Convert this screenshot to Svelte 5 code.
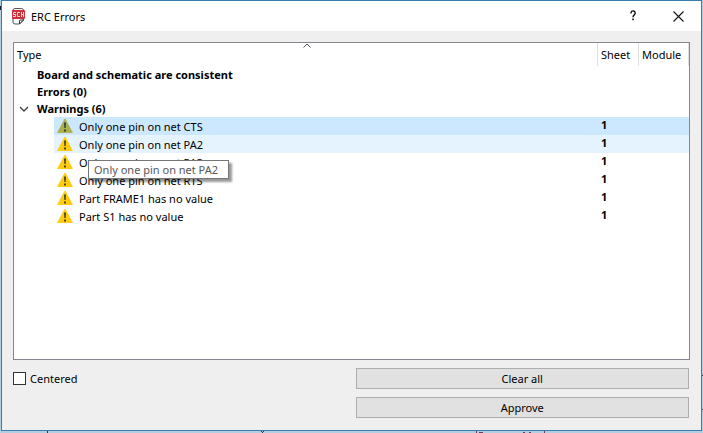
<script lang="ts">
  type Warning = { id: number; text: string; sheet: number };

  const warnings: Warning[] = [
    { id: 1, text: "Only one pin on net CTS", sheet: 1 },
    { id: 2, text: "Only one pin on net PA2", sheet: 1 },
    { id: 3, text: "Only one pin on net PA3", sheet: 1 },
    { id: 4, text: "Only one pin on net RTS", sheet: 1 },
    { id: 5, text: "Part FRAME1 has no value", sheet: 1 },
    { id: 6, text: "Part S1 has no value", sheet: 1 },
  ];

  let selected = $state(1);
  let hovered = $state(2);
  let expanded = $state(true);
  let centered = $state(false);
</script>

<div class="desktop">
  <!-- schematic sheet showing past the dialog edges -->
  <svg class="sheet" aria-hidden="true">
    <path d="M0 6h1v4h-1z" fill="#10183c" />
    <path d="M47 431h1v2h-1zM261 431h1v1h-1zM263 431h1v1h-1zM262 432h1v1h-1z" fill="#2c3a50" />
    <path d="M476 431h1v2h-1zM479 432h4v1h-4zM523 432h2v1h-2zM529 432h2v1h-2zM544 431h1v2h-1z" fill="#6b3f5c" />
    <path d="M702 375h1v1h-1zM702 409h1v1h-1z" fill="#2c3a50" />
  </svg>

  <div class="dialog" role="dialog" aria-labelledby="dialog-title">
    <header class="titlebar">
      <svg class="app-icon" viewBox="0 0 14 17" aria-hidden="true">
        <path d="M4 .5h6.500a2 2 0 0 1 2 2V12l-4 4H4a2 2 0 0 1-2-2V2.500a2 2 0 0 1 2-2z" fill="#fff" stroke="#555" />
        <path d="M8.500 16v-3a1 1 0 0 1 1-1h3z" fill="#eee" stroke="#333" />
        <rect x="1" y="2" width="13" height="9" rx="1" fill="#cf3039" />
        <path d="M5 4.500H2.500v2h2v2H2M9 4.500H6.500v4H9M10.500 4v5M12.500 4v5M10.500 6.500h2" fill="none" stroke="#f4dcdc" />
      </svg>
      <h1 id="dialog-title">ERC Errors</h1>
      <button class="caption" aria-label="Help">
        <svg width="10" height="12" viewBox="0 0 10 12" aria-hidden="true">
          <path d="M2 3.500V3a2 2 0 0 1 4.200 0c0 1.800-2.200 2.200-2.200 4.200" fill="none" stroke="#000" stroke-width="1.300" />
          <rect x="3.300" y="8.500" width="1.500" height="1.700" />
        </svg>
      </button>
      <button class="caption" aria-label="Close">
        <svg width="11" height="11" viewBox="0 0 11 11" aria-hidden="true">
          <path d="M.5.5l10 10M10.500.5l-10 10" stroke="#111" stroke-width="1.100" />
        </svg>
      </button>
    </header>

    <main>
      <div class="tree">
        <svg class="sort" width="8" height="5" viewBox="0 0 8 5" aria-hidden="true">
          <path d="M.5 4.500L4 1l3.500 3.500" fill="none" stroke="#555" />
        </svg>
        <table>
          <colgroup>
            <col />
            <col class="col-sheet" />
            <col class="col-module" />
          </colgroup>
          <thead>
            <tr>
              <th>Type</th>
              <th>Sheet</th>
              <th>Module</th>
            </tr>
          </thead>
          <tbody>
            <tr class="group">
              <td colspan="3"><span class="group-label">Board and schematic are consistent</span></td>
            </tr>
            <tr class="group">
              <td colspan="3"><span class="group-label">Errors (0)</span></td>
            </tr>
            <tr class="group">
              <td colspan="3">
                <button class="group-label toggle" aria-expanded={expanded} onclick={() => (expanded = !expanded)}>
                  <svg class="chevron" class:expanded width="10" height="10" viewBox="0 0 10 10" aria-hidden="true">
                    <path d="M3 1l4 4-4 4" fill="none" stroke="#444" stroke-width="1.400" />
                  </svg>
                  Warnings ({warnings.length})
                </button>
              </td>
            </tr>
            {#if expanded}
              {#each warnings as w (w.id)}
                <tr
                  class="item"
                  class:selected={selected === w.id}
                  class:hovered={hovered === w.id}
                  onclick={() => (selected = w.id)}
                  onmouseenter={() => (hovered = w.id)}
                >
                  <td>
                    <div class="item-label">
                      <svg width="16" height="16" viewBox="0 0 16 16" aria-hidden="true">
                        <path class="sign" d="M8 1L15.300 14.500H.7z" stroke-width="1" stroke-linejoin="round" />
                        <path class="mark" d="M7 4.500h2l-.3 5.500H7.300zM7 11.500h2v2H7z" />
                      </svg>
                      <span>{w.text}</span>
                      {#if hovered === w.id}
                        <div class="tooltip" role="tooltip">{w.text}</div>
                      {/if}
                    </div>
                  </td>
                  <td class="num">{w.sheet}</td>
                  <td></td>
                </tr>
              {/each}
            {/if}
          </tbody>
        </table>
      </div>

      <div class="actions">
        <label class="check">
          <input type="checkbox" bind:checked={centered} />
          Centered
        </label>
        <div class="buttons">
          <button class="push">Clear all</button>
          <button class="push">Approve</button>
        </div>
      </div>
    </main>
  </div>
</div>

<style>
  :global(body) {
    margin: 0;
  }
  .desktop {
    position: relative;
    display: flex;
    box-sizing: border-box;
    min-height: 100vh;
    padding: 0 1px 2px;
    background: #b1cfe2;
    color: #000;
    font-family: "Noto Sans", "Open Sans", sans-serif;
    font-size: 11px;
  }
  .sheet {
    position: absolute;
    inset: 0;
    width: 100%;
    height: 100%;
  }
  .dialog {
    position: relative;
    flex: 1;
    display: flex;
    flex-direction: column;
    min-width: 0;
    background: #efefef;
    border: 1px solid #3b7cab;
  }
  button,
  input {
    font: inherit;
    color: inherit;
  }
  .titlebar {
    display: flex;
    align-items: center;
    height: 30px;
    padding-left: 9px;
    background: #fff;
  }
  .app-icon {
    width: 14px;
    height: 17px;
    margin-right: 6px;
  }
  h1 {
    flex: 1;
    margin: 0;
    font-size: 11px;
    font-weight: 400;
  }
  .caption {
    display: flex;
    align-items: center;
    justify-content: center;
    width: 45px;
    height: 30px;
    padding: 0;
    border: 0;
    background: none;
  }
  main {
    flex: 1;
    display: flex;
    flex-direction: column;
    gap: 8px;
    padding: 11px 11px 12px;
  }
  .tree {
    position: relative;
    flex: 1;
    background: #fff;
    border: 1px solid #828790;
  }
  .sort {
    position: absolute;
    top: 0;
    left: calc((100% - 90px) / 2);
    transform: translateX(-50%);
  }
  table {
    width: 100%;
    table-layout: fixed;
    border-collapse: collapse;
    cursor: default;
  }
  .col-sheet {
    width: 41px;
  }
  .col-module {
    width: 50px;
  }
  th,
  td {
    padding: 0;
    text-align: left;
    white-space: nowrap;
  }
  th {
    height: 23px;
    padding-left: 3px;
    box-shadow: inset -1px 0 #e0e0e0;
    font-weight: 400;
  }
  .group td {
    height: 17px;
  }
  .group-label {
    display: flex;
    align-items: center;
    padding-left: 23px;
    font-weight: 700;
    line-height: 17px;
  }
  .toggle {
    border: 0;
    padding: 0 0 0 5px;
    background: none;
  }
  .chevron {
    margin-right: 8px;
  }
  .chevron.expanded {
    transform: rotate(90deg);
  }
  .item td {
    height: 18px;
  }
  .item td:first-child {
    padding-left: 40px;
  }
  .item-label {
    position: relative;
    display: flex;
    align-items: center;
    gap: 6px;
    height: 18px;
    padding-left: 3px;
  }
  .item-label > span {
    padding-top: 2px;
    line-height: 18px;
  }
  .hovered .item-label,
  .hovered td:not(:first-child) {
    background: #e5f3ff;
  }
  .selected .item-label,
  .selected td:not(:first-child) {
    background: #cce8ff;
  }
  .sign {
    fill: #fc1;
    stroke: #fc1;
  }
  .mark {
    fill: #4a4530;
  }
  .selected .sign {
    fill: #aeb04c;
    stroke: #aeb04c;
  }
  .selected .mark {
    fill: #2b4343;
  }
  .item td.num {
    padding: 0 0 3px 3px;
    height: 15px;
    font-weight: 700;
    line-height: 15px;
  }
  .tooltip {
    position: absolute;
    top: 25px;
    left: 34px;
    z-index: 1;
    padding: 0 10px 0 5px;
    border: 1px solid #767676;
    background: #fff;
    box-shadow: 3px 3px 2px rgba(0, 0, 0, 0.4);
    color: #575757;
    line-height: 17px;
  }
  .actions {
    display: grid;
    grid-template-columns: 1fr 1fr;
    gap: 9px;
    align-items: start;
    padding-right: 1px;
  }
  .check {
    display: flex;
    align-items: center;
    gap: 4px;
    height: 21px;
  }
  .check input {
    appearance: none;
    width: 13px;
    height: 13px;
    margin: 0;
    border: 1px solid #333;
    background: #fff;
  }
  .check input:checked {
    background: #333;
    box-shadow: inset 0 0 0 2px #fff;
  }
  .buttons {
    display: grid;
    gap: 8px;
  }
  .push {
    height: 21px;
    padding: 0;
    border: 1px solid #adadad;
    background: #e1e1e1;
  }
  .push:hover {
    border-color: #0078d7;
    background: #e5f1fb;
  }
</style>
